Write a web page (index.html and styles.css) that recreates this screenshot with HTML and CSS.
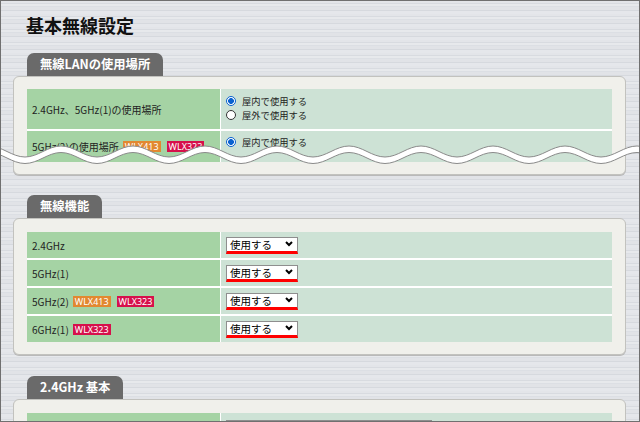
FILE: index.html
```html
<!DOCTYPE html>
<html lang="ja">
<head>
<meta charset="utf-8">
<link rel="stylesheet" href="styles.css">
</head>
<body>
<div class="page">
  <h1 class="title">基本無線設定</h1>

  <section class="sec">
    <div class="tab">無線LANの使用場所</div>
    <div class="panel">
      <div class="tbl">
        <div class="row row-tall">
          <div class="lbl">2.4GHz、5GHz(1)の使用場所</div>
          <div class="val val-stack">
            <div class="opt"><span class="radio on"></span>屋内で使用する</div>
            <div class="opt"><span class="radio"></span>屋外で使用する</div>
          </div>
        </div>
        <div class="row row-cut">
          <div class="lbl">5GHz(2)の使用場所 <span class="badge orange">WLX413</span><span class="badge red">WLX323</span></div>
          <div class="val val-top">
            <div class="opt"><span class="radio on"></span>屋内で使用する</div>
          </div>
        </div>
      </div>
    </div>
  </section>

  <section class="sec">
    <div class="tab">無線機能</div>
    <div class="panel">
      <div class="tbl">
        <div class="row">
          <div class="lbl">2.4GHz</div>
          <div class="val"><div class="select">使用する<svg class="chev" viewBox="0 0 8 6" width="8" height="6"><polyline points="1,1 4,4 7,1" fill="none" stroke="#000" stroke-width="2"/></svg></div></div>
        </div>
        <div class="row">
          <div class="lbl">5GHz(1)</div>
          <div class="val"><div class="select">使用する<svg class="chev" viewBox="0 0 8 6" width="8" height="6"><polyline points="1,1 4,4 7,1" fill="none" stroke="#000" stroke-width="2"/></svg></div></div>
        </div>
        <div class="row">
          <div class="lbl">5GHz(2) <span class="badge orange">WLX413</span><span class="badge red">WLX323</span></div>
          <div class="val"><div class="select">使用する<svg class="chev" viewBox="0 0 8 6" width="8" height="6"><polyline points="1,1 4,4 7,1" fill="none" stroke="#000" stroke-width="2"/></svg></div></div>
        </div>
        <div class="row">
          <div class="lbl">6GHz(1) <span class="badge red">WLX323</span></div>
          <div class="val"><div class="select">使用する<svg class="chev" viewBox="0 0 8 6" width="8" height="6"><polyline points="1,1 4,4 7,1" fill="none" stroke="#000" stroke-width="2"/></svg></div></div>
        </div>
      </div>
    </div>
  </section>

  <section class="sec">
    <div class="tab">2.4GHz 基本</div>
    <div class="panel">
      <div class="tbl">
        <div class="row row-last">
          <div class="lbl"></div>
          <div class="val"><div class="select wide"></div></div>
        </div>
      </div>
    </div>
  </section>

  <svg class="wave" viewBox="0 0 640 26" width="640" height="26">
    <path d="M-12 5 C1.1 5 10.9 16 24 16 S46.9 5 60 5 S82.9 16 96 16 S118.9 5 132 5 S154.9 16 168 16 S190.9 5 204 5 S226.9 16 240 16 S262.9 5 276 5 S298.9 16 312 16 S334.9 5 348 5 S370.9 16 384 16 S406.9 5 420 5 S442.9 16 456 16 S478.9 5 492 5 S514.9 16 528 16 S550.9 5 564 5 S586.9 16 600 16 S622.9 5 636 5 S658.9 16 672 16 L672 22.5 C658.9 22.5 649.1 11.5 636 11.5 S613.1 22.5 600 22.5 S577.1 11.5 564 11.5 S541.1 22.5 528 22.5 S505.1 11.5 492 11.5 S469.1 22.5 456 22.5 S433.1 11.5 420 11.5 S397.1 22.5 384 22.5 S361.1 11.5 348 11.5 S325.1 22.5 312 22.5 S289.1 11.5 276 11.5 S253.1 22.5 240 22.5 S217.1 11.5 204 11.5 S181.1 22.5 168 22.5 S145.1 11.5 132 11.5 S109.1 22.5 96 22.5 S73.1 11.5 60 11.5 S37.1 22.5 24 22.5 S1.1 11.5 -12 11.5 Z" fill="#fff" stroke="#8a8a8a" stroke-width="1"/>
  </svg>
</div>
</body>
</html>
```
FILE: styles.css
```css
* { box-sizing: border-box; }
html, body { margin: 0; padding: 0; }
body {
  width: 640px;
  height: 422px;
  overflow: hidden;
  font-family: "Noto Sans CJK JP", "Noto Sans", sans-serif;
  font-size: 10px;
  color: #222;
}
.page {
  position: relative;
  width: 640px;
  height: 422px;
  overflow: hidden;
  border: 1px solid #707070;
  padding: 12px 13px 0 12px;
  background-color: #dfe1e6;
  background-image: repeating-linear-gradient(180deg,
    #e3e5e9 0px, #e3e5e9 2px,
    #d8dbe0 2px, #d8dbe0 3px,
    #e7e9ec 3px, #e7e9ec 5px,
    #dcdfe4 5px, #dcdfe4 6px,
    #e1e3e7 6px, #e1e3e7 9px,
    #d6d9de 9px, #d6d9de 10px,
    #e5e7eb 10px, #e5e7eb 13px);
}
.title {
  margin: 0 0 16px 13px;
  font-size: 18px;
  line-height: 24px;
  height: 24px;
  font-weight: bold;
  color: #111;
}
.sec { margin-bottom: 20px; }
.sec:nth-of-type(2) { margin-bottom: 21px; }
.tab {
  display: block;
  width: fit-content;
  margin-left: 14px;
  height: 23px;
  line-height: 23px;
  padding: 0 13px;
  background: #6a6a6a;
  color: #fff;
  font-size: 12.3px;
  font-weight: bold;
  border-radius: 7px 7px 0 0;
}
.panel {
  background: #f0f0eb;
  border: 1px solid #c2c2be;
  border-radius: 6px;
  padding: 13px 13px 12px 13px;
  box-shadow: 0 1px 0 #b9b9b9;
}
.sec:first-of-type .panel { padding-top: 12px; }
.tbl {
  display: flex;
  flex-direction: column;
  gap: 2px;
  background: #fff;
}
.row {
  display: flex;
  height: 26px;
}
.row-tall { height: 40px; }
.row-cut { height: 31px; }
.row-last { height: 40px; }
.lbl {
  width: 194px;
  flex: none;
  background: #a5d3a4;
  border-right: 1px solid #fff;
  padding-left: 5px;
  display: flex;
  align-items: center;
  font-size: 10px;
  color: #222;
  white-space: nowrap;
}
.val {
  flex: 1;
  background: #cde2d5;
  padding-left: 5px;
  display: flex;
  align-items: center;
  font-size: 9.3px;
}
.val-stack {
  flex-direction: column;
  align-items: flex-start;
  justify-content: center;
  padding-bottom: 2px;
}
.val-top {
  flex-direction: column;
  align-items: flex-start;
  justify-content: flex-start;
  padding-top: 4px;
}
.opt {
  display: flex;
  align-items: center;
  height: 13.5px;
  line-height: 12px;
  color: #222;
}
.radio {
  width: 10px;
  height: 10px;
  border-radius: 50%;
  border: 1px solid #333;
  background: #fff;
  margin-right: 6px;
  flex: none;
}
.radio.on {
  border-color: #0a62d0;
  background: radial-gradient(circle, #0a62d0 0, #0a62d0 2.6px, #fff 3.2px);
}
.badge {
  display: inline-block;
  height: 11px;
  line-height: 11px;
  padding: 0 2px;
  margin-left: 4px;
  font-size: 9px;
  color: #fff;
  font-family: "Noto Sans", "Liberation Sans", sans-serif;
}
.badge + .badge { margin-left: 6px; }
.badge.orange { background: #e28831; }
.badge.red { background: #d6104b; }
.select {
  width: 72px;
  height: 17px;
  border: 1px solid #8e8e8e;
  border-bottom: 3px solid #f00;
  background: #fff;
  display: flex;
  align-items: center;
  justify-content: space-between;
  padding: 0 4px 0 3px;
  font-size: 10.5px;
  line-height: 13px;
  color: #000;
}
.select.wide {
  width: 206px;
  border-bottom: 1px solid #8e8e8e;
  align-self: flex-start;
  margin-top: 7px;
}
.chev { flex: none; }
.wave {
  position: absolute;
  left: 0;
  top: 140px;
  display: block;
}
```
